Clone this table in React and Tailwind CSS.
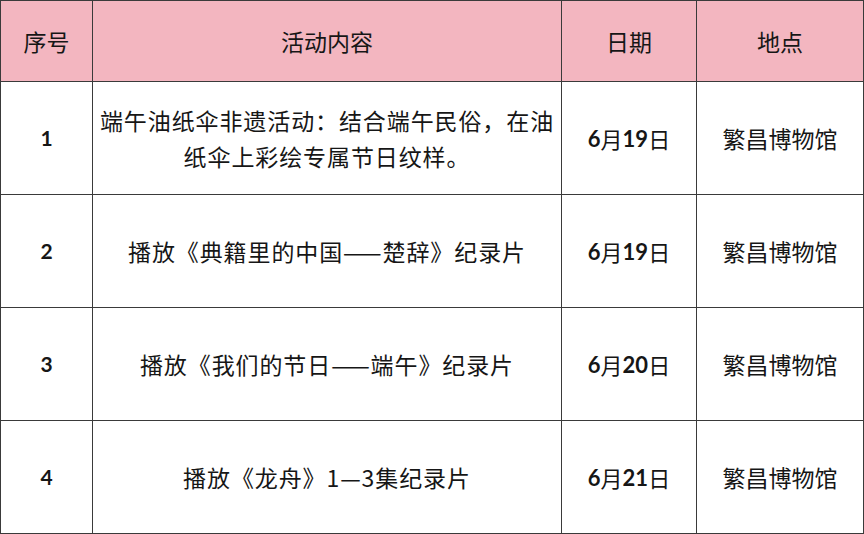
const rows = [
  {
    no: '1',
    content: (
      <>
        端午油纸伞非遗活动：结合端午民俗，在油
        <br />
        纸伞上彩绘专属节日纹样。
      </>
    ),
    day: '19',
    place: '繁昌博物馆',
  },
  { no: '2', content: '播放《典籍里的中国——楚辞》纪录片', day: '19', place: '繁昌博物馆' },
  { no: '3', content: '播放《我们的节日——端午》纪录片', day: '20', place: '繁昌博物馆' },
  { no: '4', content: '播放《龙舟》1—3集纪录片', day: '21', place: '繁昌博物馆' },
];

const cell = 'flex items-center justify-center border-r border-b border-[#3a3a3a] text-center';

export default function App() {
  return (
    <div className="w-[864px] h-[534px] bg-white font-['Noto_Sans_CJK_SC',sans-serif] text-[#161616]">
      <div className="grid grid-cols-[92px_469px_135px_167px] grid-rows-[81px_113px_113px_113px_113px] border-l border-t border-[#3a3a3a]">
        {/* Header */}
        <div className={`${cell} bg-[#f3b6c0] text-[23px]`}>序号</div>
        <div className={`${cell} bg-[#f3b6c0] text-[23px]`}>活动内容</div>
        <div className={`${cell} bg-[#f3b6c0] text-[23px]`}>日期</div>
        <div className={`${cell} bg-[#f3b6c0] text-[23px]`}>地点</div>

        {/* Body */}
        {rows.map((r) => (
          <div key={r.no} className="contents">
            <div className={`${cell} font-['Lato',sans-serif] font-bold text-[21px]`}>{r.no}</div>
            <div className={`${cell} text-[23px] leading-[36px] tracking-[0.9px]`}>
              <span>{r.content}</span>
            </div>
            <div className={`${cell} text-[22px]`}>
              <span className="font-['Lato',sans-serif] font-bold">6</span>
              <span>月</span>
              <span className="font-['Lato',sans-serif] font-bold">{r.day}</span>
              <span>日</span>
            </div>
            <div className={`${cell} text-[23px]`}>{r.place}</div>
          </div>
        ))}
      </div>
    </div>
  );
}
